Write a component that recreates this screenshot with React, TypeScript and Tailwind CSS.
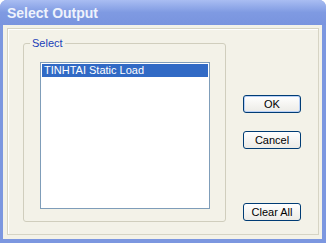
export default function App() {
  const ui = { fontFamily: '"Liberation Sans", Arial, sans-serif' };
  return (
    <div className="w-[326px] h-[243px] bg-white" style={ui}>
      <div className="w-full h-full flex flex-col bg-[#7C97E0] rounded-t-[7px] overflow-hidden">
        {/* title bar */}
        <div className="h-[25px] shrink-0 flex items-center pl-[7px] bg-gradient-to-b from-[#A9BDF2] via-[#7F9AE2] to-[#7994DF]">
          <span className="text-[14px] font-bold text-[#EEF2FC] leading-none pt-px">Select Output</span>
        </div>
        {/* window body */}
        <div className="flex-1 ml-[3px] mr-[4px] mb-[4px] bg-[#F3F2E8] pt-[3px] pl-[4px] pr-[3px] pb-[4px] text-[11px] text-black">
          <div className="w-[312px] h-[207px] border border-[#D6D4C4] shadow-[inset_1px_1px_0_#FFFFFF] flex">
            {/* group box */}
            <div className="relative ml-[15px] mt-[14px] w-[203px] h-[179px] border border-[#D0CEBD] rounded-[3px] pl-[16px] pt-[18px]">
              <span className="absolute left-[6px] top-[-7px] px-[2px] bg-[#F3F2E8] text-[#1A3FB8] leading-[13px]">Select</span>
              <div className="w-[170px] h-[147px] border border-[#7F9DB9] bg-white p-px">
                <div className="h-[13px] bg-[#316AC5] text-white leading-[13px] pl-[2px]">TINHTAI Static Load</div>
              </div>
            </div>
            {/* buttons */}
            <div className="ml-[17px] mt-[66px] flex flex-col w-[58px]">
              <button className="h-[18px] w-[58px] rounded-[3px] border border-[#003C74] bg-gradient-to-b from-white to-[#ECEBE6] shadow-[inset_0_0_0_1px_#B8D0F6] text-[11px] leading-none">OK</button>
              <button className="mt-[18px] h-[18px] w-[58px] rounded-[3px] border border-[#003C74] bg-gradient-to-b from-white to-[#ECEBE6] text-[11px] leading-none">Cancel</button>
              <button className="mt-[54px] h-[18px] w-[58px] rounded-[3px] border border-[#003C74] bg-gradient-to-b from-white to-[#ECEBE6] text-[11px] leading-none">Clear All</button>
            </div>
          </div>
        </div>
      </div>
    </div>
  );
}
